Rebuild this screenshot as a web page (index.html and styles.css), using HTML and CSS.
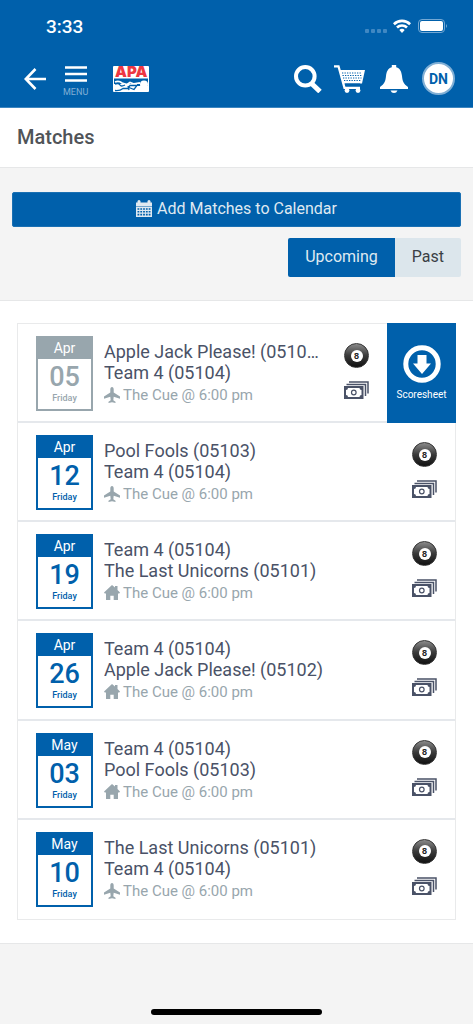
FILE: index.html
```html
<!DOCTYPE html>
<html lang="en">
<head>
<meta charset="utf-8">
<meta name="viewport" content="width=device-width, initial-scale=1">
<title>Matches</title>
<link rel="stylesheet" href="styles.css">
</head>
<body>
<svg class="defs" aria-hidden="true">
  <symbol id="money" viewBox="0 0 25 18">
    <path d="M5 1h19v11.500M2.500 3.500h19V15" fill="none" stroke="#4a5267" stroke-width="1.500"/>
    <path d="M0 5h19.500v13H0z" fill="#4a5267"/>
    <path d="M4 7h11.500a2 2 0 0 0 2 2v5a2 2 0 0 0-2 2H4a2 2 0 0 0-2-2V9a2 2 0 0 0 2-2z" fill="#fff"/>
    <circle cx="9.800" cy="11.500" r="2.300" fill="#fff" stroke="#4a5267" stroke-width="1.200"/>
  </symbol>
  <symbol id="plane" viewBox="0 0 16 16">
    <path d="M8 0c1.100 0 1.700 1.200 1.700 2.500v3L16 9.500v2.200L9.700 9.800l-.4 3.400 2.200 1.500V16L8 15.200 4.500 16v-1.300l2.200-1.500-.4-3.400L0 11.700V9.500l6.300-4v-3C6.300 1.200 6.900 0 8 0z" fill="#98a6ad"/>
  </symbol>
  <symbol id="house" viewBox="0 0 16 16">
    <path d="M8 0l3 2.600V1h2.500v4L16 7.600l-1 1.100-1-.5V15H9.700v-4.200H6.300V15H2V8.200l-1 .5-1-1.100z" fill="#98a6ad"/>
  </symbol>
</svg>

<header class="top">
  <div class="status">
    <span class="clock">3:33</span>
    <svg class="signal" viewBox="0 0 22 4" aria-hidden="true"><g fill="#4088c3"><rect width="4" height="4" rx="1"/><rect x="6" width="4" height="4" rx="1"/><rect x="12" width="4" height="4" rx="1"/><rect x="18" width="4" height="4" rx="1"/></g></svg>
    <svg class="wifi" viewBox="0 0 18 14" aria-hidden="true"><g fill="none" stroke="#fff" stroke-width="2.600"><path d="M.9 5.200a11.600 11.600 0 0 1 16.200 0M4 8.500a7.200 7.200 0 0 1 10 0"/></g><path d="M9 14l-2.700-3a4 4 0 0 1 5.400 0z" fill="#fff"/></svg>
    <svg class="battery" viewBox="0 0 30 14" aria-hidden="true"><rect x=".5" y=".5" width="26" height="13" rx="3.500" fill="none" stroke="#73a8d4"/><rect x="2" y="2" width="23" height="10" rx="2" fill="#fff"/><path d="M28 5q2 2 0 4z" fill="#73a8d4"/></svg>
  </div>
  <nav class="bar">
    <button class="plain back" aria-label="Back"><svg viewBox="0 0 22 22"><path d="M11.500 1L1.800 11l9.700 10M2 11h20" fill="none" stroke="#fff" stroke-width="2.600"/></svg></button>
    <button class="plain menu"><svg viewBox="0 0 22 16" aria-hidden="true"><path d="M0 1.500h22M0 8h22M0 14.500h22" stroke="#fff" stroke-width="2.500"/></svg><span>MENU</span></button>
    <a class="logo" href="#" aria-label="APA home">
      <span class="logo-text">APA</span>
      <svg viewBox="0 0 36 14" aria-hidden="true">
        <path d="M1 .5h34V6H1z" fill="#0060ab"/>
        <path d="M2 4q4-1.500 7 1l5 1.500 3-2 4 1.500 6-1" fill="none" stroke="#fff" stroke-width="1.800"/>
        <path d="M2 6q4-1 5 1t5 0M2 12.500q5 .5 8-2h5l2-3h7l-3 4-5-2M16 12l-1-4" fill="none" stroke="#0060ab" stroke-width="1.300"/>
        <path d="M24 6h11v2H24z" fill="#0060ab"/>
        <circle cx="31" cy="6.500" r="4" fill="#fff"/>
      </svg>
    </a>
    <button class="plain search" aria-label="Search"><svg viewBox="0 0 28 28"><circle cx="11.300" cy="11.300" r="9.300" fill="none" stroke="#fff" stroke-width="4"/><path d="M17.500 18.500l8.500 8" stroke="#fff" stroke-width="5"/></svg></button>
    <button class="plain cart" aria-label="Cart"><svg viewBox="0 0 31 28"><path d="M0 1.300h4.500l6 21.500H26" fill="none" stroke="#fff" stroke-width="2.300"/><path d="M5.500 5H31l-3 13.500H9.500z" fill="#fff"/><path d="M8 8h20M8.500 10.500H28M9 13h18.500M10 15.500h17" stroke="#0060ab" stroke-width="1.200" stroke-dasharray="1.300 1.200"/><path d="M11 19.500h15" stroke="#0060ab" stroke-width="2"/><circle cx="13" cy="25.500" r="2.400" fill="#fff"/><circle cx="24" cy="25.500" r="2.400" fill="#fff"/></svg></button>
    <button class="plain bell" aria-label="Notifications"><svg viewBox="0 0 28 28"><path d="M11.800 0h4.400v2.200C20.500 3.500 21.500 7 22 11c.5 5 1.500 8 6 11v2H0v-2c4.500-3 5.500-6 6-11 .5-4 1.500-7.500 5.800-8.800zM10.500 25.500h7q-1 2.500-3.500 2.500t-3.500-2.500z" fill="#fff"/></svg></button>
    <button class="plain avatar">DN</button>
  </nav>
</header>

<div class="title"><h1>Matches</h1></div>

<section class="tools">
  <button class="calendar-button"><svg viewBox="0 0 16 17" aria-hidden="true"><path d="M0 2.500h1.500V1q1.500-2 3 0v1.500h7V1q1.500-2 3 0v1.500H16v4H0zM0 7h16v10H0z" fill="#dfe9f1"/><path d="M1.500 9h13M1.500 11.800h13M1.500 14.600h13" stroke="#0060ab" stroke-width="1.600" stroke-dasharray="1.800 1"/></svg>Add Matches to Calendar</button>
  <div class="tabs"><button class="tab active" aria-pressed="true">Upcoming</button><button class="tab" aria-pressed="false">Past</button></div>
</section>

<main class="panel">
  <ul class="matches">
    <li class="match done">
      <time class="date" datetime="04-05"><span class="month">Apr</span><span class="day">05</span><span class="weekday">Friday</span></time>
      <div class="info"><div class="team">Apple Jack Please! (05102)</div><div class="team">Team 4 (05104)</div><div class="place"><svg aria-hidden="true"><use href="#plane"/></svg>The Cue @ 6:00 pm</div></div>
      <div class="kinds"><span class="ball"><span class="spot">8</span></span><svg class="money"><use href="#money"/></svg></div>
      <button class="scoresheet"><svg viewBox="0 0 38 38" aria-hidden="true"><circle cx="19" cy="19" r="16.200" fill="none" stroke="#fff" stroke-width="5"/><path d="M14.500 10h9v8.500H28L19 29l-9-10.500h4.500z" fill="#fff"/></svg>Scoresheet</button>
    </li>
    <li class="match">
      <time class="date" datetime="04-12"><span class="month">Apr</span><span class="day">12</span><span class="weekday">Friday</span></time>
      <div class="info"><div class="team">Pool Fools (05103)</div><div class="team">Team 4 (05104)</div><div class="place"><svg aria-hidden="true"><use href="#plane"/></svg>The Cue @ 6:00 pm</div></div>
      <div class="kinds"><span class="ball"><span class="spot">8</span></span><svg class="money"><use href="#money"/></svg></div>
    </li>
    <li class="match">
      <time class="date" datetime="04-19"><span class="month">Apr</span><span class="day">19</span><span class="weekday">Friday</span></time>
      <div class="info"><div class="team">Team 4 (05104)</div><div class="team">The Last Unicorns (05101)</div><div class="place"><svg aria-hidden="true"><use href="#house"/></svg>The Cue @ 6:00 pm</div></div>
      <div class="kinds"><span class="ball"><span class="spot">8</span></span><svg class="money"><use href="#money"/></svg></div>
    </li>
    <li class="match">
      <time class="date" datetime="04-26"><span class="month">Apr</span><span class="day">26</span><span class="weekday">Friday</span></time>
      <div class="info"><div class="team">Team 4 (05104)</div><div class="team">Apple Jack Please! (05102)</div><div class="place"><svg aria-hidden="true"><use href="#house"/></svg>The Cue @ 6:00 pm</div></div>
      <div class="kinds"><span class="ball"><span class="spot">8</span></span><svg class="money"><use href="#money"/></svg></div>
    </li>
    <li class="match">
      <time class="date" datetime="05-03"><span class="month">May</span><span class="day">03</span><span class="weekday">Friday</span></time>
      <div class="info"><div class="team">Team 4 (05104)</div><div class="team">Pool Fools (05103)</div><div class="place"><svg aria-hidden="true"><use href="#house"/></svg>The Cue @ 6:00 pm</div></div>
      <div class="kinds"><span class="ball"><span class="spot">8</span></span><svg class="money"><use href="#money"/></svg></div>
    </li>
    <li class="match">
      <time class="date" datetime="05-10"><span class="month">May</span><span class="day">10</span><span class="weekday">Friday</span></time>
      <div class="info"><div class="team">The Last Unicorns (05101)</div><div class="team">Team 4 (05104)</div><div class="place"><svg aria-hidden="true"><use href="#plane"/></svg>The Cue @ 6:00 pm</div></div>
      <div class="kinds"><span class="ball"><span class="spot">8</span></span><svg class="money"><use href="#money"/></svg></div>
    </li>
  </ul>
</main>
<footer class="footer"><div class="home-bar"></div></footer>
</body>
</html>
```
FILE: styles.css
```css
* { box-sizing: border-box; }

body {
  margin: 0;
  min-height: 100vh;
  display: flex;
  flex-direction: column;
  background: #f4f4f4;
  color: #4a5267;
  font-family: Roboto, "Liberation Sans", sans-serif;
}

svg { display: block; flex: none; }
button { margin: 0; padding: 0; border: 0; font: inherit; cursor: pointer; }
.defs { position: absolute; width: 0; height: 0; }

/* Header */
.top {
  background: #0060ab;
  border-bottom: 1px solid #3d86c0;
  color: #fff;
}
.status {
  display: flex;
  align-items: center;
  height: 52px;
  padding: 0 25px 0 46px;
}
.clock { flex: 1; font-size: 19px; font-weight: 500; }
.signal { width: 22px; height: 4px; margin: 10px 6px 0 0; }
.wifi { width: 18px; height: 14px; margin-right: 7px; }
.battery { width: 30px; height: 14px; }

.bar {
  display: flex;
  align-items: center;
  height: 55px;
  padding: 0 18px 2px 24px;
}
.plain { background: none; color: #fff; }
.back svg { width: 22px; height: 22px; }
.menu {
  display: flex;
  flex-direction: column;
  align-items: center;
  gap: 4px;
  margin: 6px 25px 0 17px;
  color: #80afd5;
  font-size: 9px;
  line-height: 12px;
}
.menu svg { width: 22px; height: 16px; }
.logo {
  margin-right: auto;
  border-radius: 1px;
  background: #fff;
  text-decoration: none;
}
.logo svg { width: 36px; height: 14px; }
.logo-text {
  display: block;
  color: #ed3742;
  font: 900 15px/12px Inter, Roboto, sans-serif;
  text-align: center;
}
.search svg { width: 28px; height: 28px; }
.cart { margin: 0 15px 0 12px; }
.cart svg { width: 31px; height: 28px; }
.bell svg { width: 28px; height: 28px; }
.avatar {
  width: 33px;
  height: 33px;
  margin-left: 14px;
  border: 2px solid #80afd5;
  border-radius: 50%;
  background: #fff;
  color: #0060ab;
  font-size: 14px;
  font-weight: 700;
}

/* Page title */
.title {
  padding: 16px 17px 17px;
  border-bottom: 1px solid #e6e7e8;
  background: #fff;
}
.title h1 {
  margin: 0;
  color: #505458;
  font-size: 20px;
  font-weight: 500;
  line-height: 26px;
}

/* Calendar action and tabs */
.tools { padding: 24px 12px 23px; }
.calendar-button {
  display: flex;
  align-items: center;
  justify-content: center;
  gap: 5px;
  width: 100%;
  height: 35px;
  margin-bottom: 11px;
  padding-bottom: 2px;
  border: 1px solid #1a70b3;
  border-radius: 2px;
  background: #0060ab;
  color: #dfe9f1;
  font-size: 16px;
}
.calendar-button svg { width: 16px; height: 17px; }
.tabs { display: flex; justify-content: flex-end; }
.tab {
  height: 39px;
  padding: 0 17px 2px;
  border-radius: 0 2px 2px 0;
  background: #dce6ec;
  color: #3a3f45;
  font-size: 16px;
}
.tab.active {
  border-radius: 2px 0 0 2px;
  background: #0060ab;
  color: #dfe9f1;
}

/* Match list */
.panel {
  padding: 22px 17px 23px;
  border-top: 1px solid #e6e7e8;
  border-bottom: 1px solid #e6e7e8;
  background: #fff;
}
.matches {
  display: grid;
  grid-auto-rows: 1fr;
  min-height: 597px;
  margin: 0;
  padding: 0;
  border: 1px solid #e9eaeb;
  list-style: none;
}
.match {
  display: flex;
  align-items: flex-start;
  min-width: 0;
  padding: 12px 18px 10px;
  border-bottom: 2px solid #e5e8ec;
}
.match:last-child { border-bottom: 0; }
.date {
  display: flex;
  flex-direction: column;
  flex: none;
  width: 57px;
  height: 75px;
  border: 2px solid #0060ab;
  color: #0060ab;
  font-weight: 500;
  text-align: center;
}
.month {
  background: #0060ab;
  color: #fff;
  font-size: 14px;
  font-weight: 400;
  line-height: 21px;
}
.day { font-size: 27px; line-height: 36px; }
.weekday { font-size: 9px; line-height: 6px; }
.done .date { border-color: #98a6ad; color: #98a6ad; }
.done .month { background: #98a6ad; }

.info { flex: 1; min-width: 0; padding: 5px 22px 0 11px; }
.team {
  overflow: hidden;
  font-size: 18px;
  line-height: 21px;
  text-overflow: ellipsis;
  white-space: nowrap;
}
.place {
  display: flex;
  align-items: center;
  gap: 3px;
  color: #98a6ad;
  font-size: 15px;
  line-height: 24px;
}
.place svg { width: 16px; height: 16px; }

.kinds {
  display: flex;
  flex-direction: column;
  align-items: center;
  gap: 13px;
  padding-top: 7px;
}
.ball {
  display: flex;
  align-items: center;
  justify-content: center;
  width: 25px;
  height: 25px;
  border: 1px solid #333;
  border-radius: 50%;
  background: linear-gradient(#8a8a8a, #3a3a3a 50%, #111);
}
.spot {
  width: 12px;
  height: 12px;
  border-radius: 50%;
  background: #fff;
  color: #222;
  font: 700 9px/12px "Liberation Sans", sans-serif;
  text-align: center;
}
.money { width: 25px; height: 18px; }

.scoresheet {
  display: flex;
  flex-direction: column;
  align-items: center;
  justify-content: center;
  align-self: stretch;
  gap: 6px;
  width: 69px;
  margin: -13px -19px -12px 18px;
  background: #0060ab;
  color: #fff;
  font-size: 10px;
  line-height: 12px;
}
.scoresheet svg { width: 38px; height: 38px; }

/* Bottom area */
.footer {
  display: flex;
  flex: 1;
  align-items: flex-end;
  justify-content: center;
  padding: 60px 0 9px;
}
.home-bar {
  width: 36%;
  height: 6px;
  border-radius: 3px;
  background: #000;
}
```
